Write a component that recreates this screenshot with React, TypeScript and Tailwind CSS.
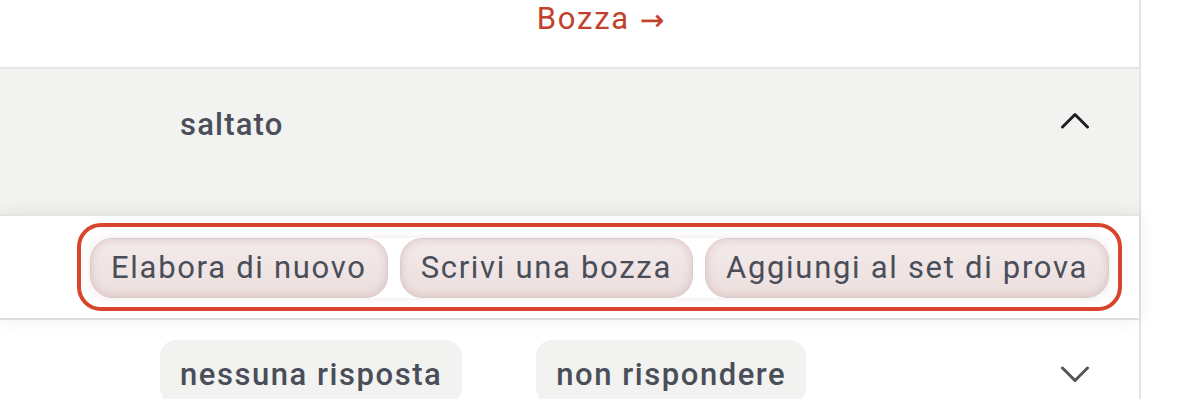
const ChevronUp = () => (
  <svg width="30" height="17" viewBox="0 0 30 17" fill="none">
    <polyline points="2.5,15 15,2.5 27.5,15" stroke="#1f1f1f" strokeWidth="3" strokeLinecap="round" strokeLinejoin="round" />
  </svg>
);

const ChevronDown = () => (
  <svg width="30" height="17" viewBox="0 0 30 17" fill="none">
    <polyline points="2.5,2 15,14.5 27.5,2" stroke="#555" strokeWidth="3" strokeLinecap="round" strokeLinejoin="round" />
  </svg>
);

const actions = ["Elabora di nuovo", "Scrivi una bozza", "Aggiungi al set di prova"];

export default function App() {
  return (
    <div className="flex w-[1200px] h-[399px] overflow-hidden bg-white font-['Roboto',sans-serif]">
      <div className="w-[1141px] shrink-0 border-r-2 border-[#e4e4e2] flex flex-col">
        {/* header link */}
        <div className="h-[67px] shrink-0 flex justify-center pl-[62px]">
          <div className="h-[38px] flex items-center gap-[10px] text-[#c2412a]">
            <span className="text-[31px] leading-[38px] tracking-[1.8px]">Bozza</span>
            <span className="font-['DejaVu_Sans',sans-serif] text-[29px] leading-none mt-[2px] [-webkit-text-stroke:0.3px_#c2412a]">→</span>
          </div>
        </div>

        {/* open section */}
        <div className="h-[147px] shrink-0 border-t-2 border-[#e4e4e2] bg-[#f2f2f0] flex items-start pl-[180px] pr-[49px] pt-[33px]">
          <span className="text-[31px] font-medium tracking-[1.2px] text-[#4a4e58] flex-1">saltato</span>
          <div className="pt-[10px]">
            <ChevronUp />
          </div>
        </div>

        {/* action row */}
        <div className="h-[104px] shrink-0 border-t-2 border-[#e4e4e2] bg-white flex items-center justify-end pr-[17px] shadow-[0_0_18px_rgba(0,0,0,0.08)] relative z-10">
          <div className="rounded-[24px] border-[4px] border-[#d9452c] px-[9px] pt-[11px] pb-[9px]">
            <div className="flex gap-[12px] rounded-[20px] shadow-[0_0_10px_rgba(150,100,100,0.15)]">
              {actions.map((a) => (
                <button
                  key={a}
                  className="h-[60px] px-[20px] rounded-[22px] border border-[#d9cccc] bg-[linear-gradient(#f3ebea,#ecdfde)] shadow-[inset_0_0_8px_rgba(170,110,110,0.3)] text-[31px] tracking-[1.7px] text-[#4a4e58]"
                >
                  {a}
                </button>
              ))}
            </div>
          </div>
        </div>

        {/* next row */}
        <div className="flex-1 border-t-2 border-[#e4e4e2] bg-white flex items-start pl-[160px] pr-[49px] pt-[20px]">
          <div className="flex gap-[74px] flex-1">
            <span className="h-[64px] px-[20px] pt-[12px] rounded-[16px] bg-[#f2f2f0] text-[31px] font-medium tracking-[1.55px] text-[#4a4e58]">
              nessuna risposta
            </span>
            <span className="h-[64px] px-[20px] pt-[12px] rounded-[16px] bg-[#f2f2f0] text-[31px] font-medium tracking-[1.55px] text-[#4a4e58]">
              non rispondere
            </span>
          </div>
          <div className="pt-[26px]">
            <ChevronDown />
          </div>
        </div>
      </div>
    </div>
  );
}
